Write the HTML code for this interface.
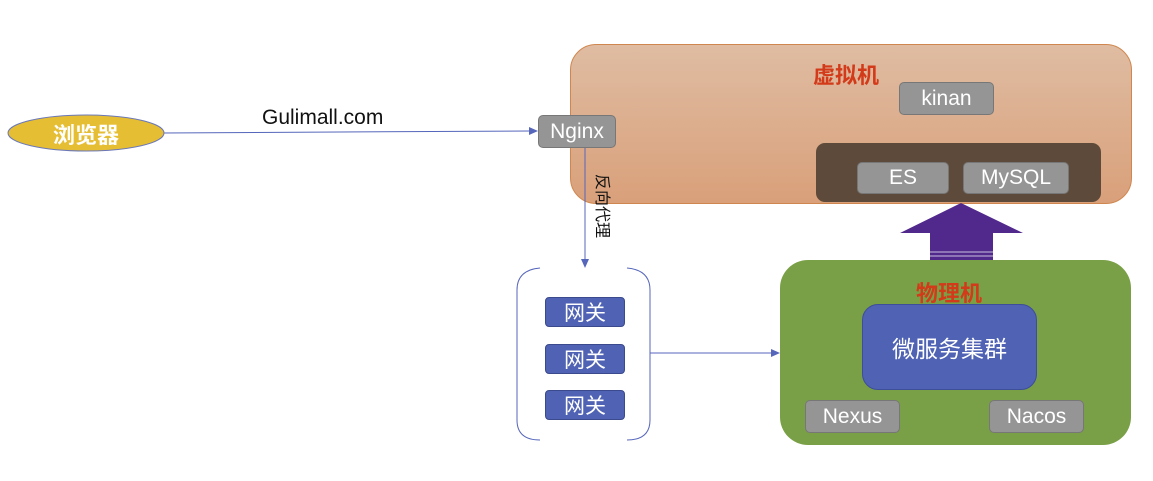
<!DOCTYPE html>
<html><head><meta charset="utf-8"><style>
body{margin:0;width:1153px;height:481px;background:#fff;position:relative;overflow:hidden;font-family:"Liberation Sans","Noto Sans CJK SC",sans-serif}
.a{position:absolute;box-sizing:border-box}
.g{background:#959595;border:1px solid #777;border-radius:5px;color:#fff;font-size:21px;display:flex;align-items:center;justify-content:center}
.b{background:#4f62b3;border:1px solid #3b4a8c;border-radius:4px;color:#fff;font-size:21px;display:flex;align-items:center;justify-content:center}
.red{color:#d23a1a;font-size:22px;font-weight:bold}
</style></head><body>
<div class="a" style="left:570px;top:44px;width:562px;height:160px;border-radius:26px;background:linear-gradient(#dfbca2,#d9a07a);border:1px solid #d0874f"></div>
<div class="a red" style="left:813px;top:58px">虚拟机</div>
<div class="a g" style="left:899px;top:82px;width:95px;height:33px">kinan</div>
<div class="a" style="left:816px;top:143px;width:285px;height:59px;background:#5e4a3a;border-radius:9px"></div>
<div class="a g" style="left:857px;top:162px;width:92px;height:32px">ES</div>
<div class="a g" style="left:963px;top:162px;width:106px;height:32px">MySQL</div>
<svg class="a" style="left:0;top:0" width="1153" height="481">
<polygon points="961,203 1023,233 993,233 993,262 930,262 930,233 900,233" fill="#51298c"/>
<line x1="930" y1="252" x2="993" y2="252" stroke="#c8c0e0" stroke-width="1"/>
<line x1="930" y1="256" x2="993" y2="256" stroke="#c8c0e0" stroke-width="1"/>
<line x1="163" y1="133" x2="530" y2="131" stroke="#5566bb" stroke-width="1"/>
<polygon points="538,131 529,127 529,135" fill="#5566bb"/>
<line x1="585" y1="147" x2="585" y2="260" stroke="#5566bb" stroke-width="1"/>
<polygon points="585,268 581,259 589,259" fill="#5566bb"/>
<line x1="650" y1="353" x2="772" y2="353" stroke="#5566bb" stroke-width="1"/>
<polygon points="780,353 771,349 771,357" fill="#5566bb"/>
<path d="M540,268 Q517,270 517,290 L517,420 Q517,440 540,440" fill="none" stroke="#5566bb"/>
<path d="M627,268 Q650,270 650,290 L650,420 Q650,440 627,440" fill="none" stroke="#5566bb"/>
<ellipse cx="86" cy="133" rx="78" ry="18" fill="#e6be33" stroke="#6a78b8"/>
</svg>
<div class="a" style="left:8px;top:118px;width:156px;text-align:center;color:#fff;font-size:22px;font-weight:bold">浏览器</div>
<div class="a" style="left:262px;top:106px;font-size:21px;color:#111">Gulimall.com</div>
<div class="a g" style="left:538px;top:115px;width:78px;height:33px">Nginx</div>
<div class="a" style="left:566px;top:196px;width:70px;height:20px;font-size:16px;line-height:20px;transform:rotate(90deg);color:#111;white-space:nowrap;text-align:center">反向代理</div>
<div class="a b" style="left:545px;top:297px;width:80px;height:30px">网关</div>
<div class="a b" style="left:545px;top:344px;width:80px;height:30px">网关</div>
<div class="a b" style="left:545px;top:390px;width:80px;height:30px">网关</div>
<div class="a" style="left:780px;top:260px;width:351px;height:185px;border-radius:28px;background:#7aa047"></div>
<div class="a red" style="left:916px;top:276px">物理机</div>
<div class="a b" style="left:862px;top:304px;width:175px;height:86px;border-radius:16px;font-size:23px;border-color:#3d4f99">微服务集群</div>
<div class="a g" style="left:805px;top:400px;width:95px;height:33px">Nexus</div>
<div class="a g" style="left:989px;top:400px;width:95px;height:33px">Nacos</div>
</body></html>
